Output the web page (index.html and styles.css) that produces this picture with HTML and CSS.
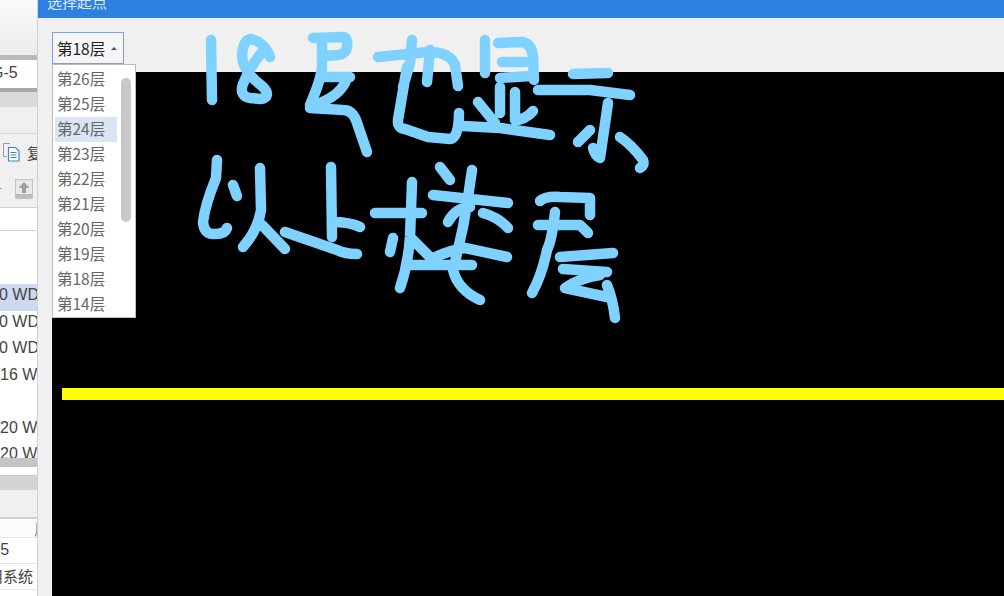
FILE: index.html
```html
<!DOCTYPE html>
<html lang="zh">
<head>
<meta charset="utf-8">
<title>选择起点</title>
<link rel="stylesheet" href="styles.css">
</head>
<body>
<div class="app">
  <aside class="side">
    <div class="side-top"></div>
    <div class="band-dark"></div>
    <div class="field"><span class="clip">G-5</span></div>
    <div class="band-thin"></div>
    <div class="band-grey"></div>
    <div class="side-plain"></div>
    <div class="tool-row">
      <svg class="doc-icon" viewBox="0 0 20 20" width="20" height="20">
        <path d="M8 1.500H1.500v13H5" fill="none" stroke="#9a9a9a"/>
        <path d="M6.500 5.500h7l3.500 3.500v10h-10.500z" fill="#fff" stroke="#3f88c8" stroke-width="1.200"/>
        <path d="M8.500 10.500h6M8.500 13h6M8.500 15.500h6" stroke="#3f88c8" stroke-width="1.200"/>
      </svg>
      <span class="tool-label">复</span>
    </div>
    <div class="tool-row second">
      <span class="dash"></span>
      <span class="up-btn">
        <svg viewBox="0 0 18 20" width="18" height="20">
          <rect x="0.500" y="0.500" width="17" height="19" fill="#e9e9e9" stroke="#c4c4c4"/>
          <rect x="1" y="15" width="16" height="4" fill="#bdbdbd"/>
          <path d="M9 3l5.500 6h-3.500v5h-4v-5h-3.500z" fill="#a0a0a0"/>
        </svg>
      </span>
    </div>
    <div class="list-head"></div>
    <ul class="list">
      <li class="blank"></li>
      <li class="sel"><span class="clip wd">0 WD</span></li>
      <li><span class="clip wd">0 WD</span></li>
      <li><span class="clip wd">0 WD</span></li>
      <li><span class="clip wd16">16 W</span></li>
      <li></li>
      <li><span class="clip wd16">20 W</span></li>
      <li class="cut"><span class="clip wd16">20 W</span></li>
    </ul>
    <div class="hscroll"></div>
    <div class="band-white"></div>
    <div class="band-grey low"></div>
    <div class="side-plain low"></div>
    <div class="table-head"><span class="col-mark">厂</span></div>
    <div class="cell"><span class="clip small">-5</span></div>
    <div class="cell"><span class="clip sys">用系统</span></div>
  </aside>

  <main class="dialog">
    <header class="titlebar"><span class="title">选择起点</span></header>
    <div class="toolbar">
      <div class="select"><span>第18层</span><i class="caret"></i></div>
    </div>
    <div class="stage">
      <div class="gutter"></div>
      <div class="canvas"><div class="route"></div></div>
    </div>
    <ul class="menu">
      <li>第26层</li>
      <li>第25层</li>
      <li class="active">第24层</li>
      <li>第23层</li>
      <li>第22层</li>
      <li>第21层</li>
      <li>第20层</li>
      <li>第19层</li>
      <li>第18层</li>
      <li>第14层</li>
    </ul>
    <div class="menu-thumb"></div>
  </main>

  <svg class="ink" viewBox="0 0 1004 596" width="1004" height="596" fill="none" stroke="#7fd1ff" stroke-width="10.500" stroke-linecap="round" stroke-linejoin="round">
    <path d="M211 40L212 100"/>
    <path d="M270 57C266 46 258 40 250 39C243 41 241 52 243 62C245 72 254 80 263 87C269 93 268 98 261 99L250 98C243 97 240 92 243 84C247 74 254 62 262 52"/>
    <path d="M313 38L343 37Q348 38 347 47Q346 54 338 55L323 56M322 40L322 67Q321 80 310 105M322 77L350 77M347 78Q342 94 320 103M310 108L343 110Q352 110 356 120L367 152"/>
    <path d="M378 57L428 52Q450 52 455 65L458 86M412 40L410 63L403 87M430 50L427 82M407 67L398 120Q397 128 405 129L428 137L450 139Q459 138 459 113"/>
    <path d="M485 40L485 73M498 43L522 42Q532 44 533 57L534 80M502 62L525 62M500 78L530 76M500 87L500 113M515 92L515 120Q525 120 533 111M478 102L495 123M463 126L500 128L550 135"/>
    <path d="M573 74L608 73M538 90L590 90L630 95M608 103Q604 130 600 158Q595 156 593 148M590 130L578 142M620 137Q632 145 643 160Q645 165 640 168"/>
    <path d="M217 160L216 178Q205 205 203 222Q204 235 215 234Q225 234 227 228M233 185L237 196"/>
    <path d="M260 168L261 210Q258 230 243 247M262 225L285 249"/>
    <path d="M331 167L332 237M332 222Q350 222 360 227M285 232L337 250Q345 254 357 254"/>
    <path d="M375 213L422 213M412 182L410 237Q408 265 400 288M410 237L433 260M393 238L390 252M440 167L450 180M472 170Q468 200 463 227Q458 250 453 270Q458 290 480 300M433 195L508 203M448 222Q455 208 470 207M483 213Q498 217 508 228M433 258Q450 250 465 248L507 257M410 265L472 265"/>
    <path d="M540 201Q545 196 560 197L590 198L590 215M538 225L580 225L588 233M555 212Q552 240 547 250Q542 275 532 293M560 257L613 253M563 269L607 272M600 275Q580 278 565 288L607 297M607 285Q613 300 615 318"/>
  </svg>
</div>
</body>
</html>
```
FILE: styles.css
```css
* { box-sizing: border-box; }
html, body { margin: 0; padding: 0; height: 100%; overflow: hidden; }
body { font-family: "Noto Sans CJK SC", "Liberation Sans", sans-serif; background: #000; }
ul { list-style: none; margin: 0; padding: 0; }

.app { position: relative; display: flex; width: 1004px; height: 596px; overflow: hidden; }

/* left, clipped window */
.side { width: 38px; flex: none; height: 596px; background: #fff; border-right: 1px solid #c9d3de; overflow: hidden; font-family: "Liberation Sans", "Noto Sans CJK SC", sans-serif; font-size: 16px; color: #444; }
.side-top { height: 55px; background: linear-gradient(#fafafa, #ececec); }
.band-dark { height: 5px; background: #b9b9b9; }
.field { height: 28px; display: flex; align-items: center; background: #fff; padding-bottom: 2px; }
.clip { display: block; white-space: nowrap; }
.field .clip { margin-left: -9px; }
.band-thin { height: 4px; background: #a9a9a9; }
.band-grey { height: 15px; background: #d9d9d9; }
.side-plain { height: 26px; background: #f0f0f0; }
.tool-row { height: 37px; background: #f0f0f0; display: flex; align-items: center; border-top: 1px solid #d8d8d8; position: relative; }
.doc-icon { margin-left: 2px; flex: none; }
.tool-label { margin-left: 5px; font-family: "Noto Sans CJK SC", sans-serif; font-size: 15px; white-space: nowrap; }
.tool-row.second { border-top: 0; }
.dash { width: 2px; height: 1px; background: #999; flex: none; }
.up-btn { margin-left: 13px; display: flex; }
.list-head { height: 24px; background: #fff; border-top: 1px solid #cfcfcf; border-bottom: 1px solid #cfcfcf; }
.list { height: 227px; overflow: hidden; background: #fff; }
.list li { height: 26.500px; display: flex; align-items: center; white-space: nowrap; padding-bottom: 4px; }
.list li.blank { height: 53px; }
.list li.sel { background: #ccd9ee; }
.wd { margin-left: -1px; }
.wd16 { margin-left: 0; }
.hscroll { height: 9px; background: #c4c4c4; }
.band-white { height: 9px; background: #fff; border-top: 3px solid #fff; border-bottom: 1px solid #ccc; }
.band-grey.low { height: 14px; background: #d4d4d4; }
.side-plain.low { height: 27px; }
.table-head { height: 21px; background: #fbfbfb; border-top: 2px solid #cfcfcf; border-bottom: 1px solid #e8e8e8; display: flex; justify-content: flex-end; align-items: center; }
.col-mark { font-family: "Noto Sans CJK SC", sans-serif; font-size: 16px; color: #a58a72; margin-right: -13px; }
.cell { height: 26px; display: flex; align-items: center; border-bottom: 1px solid #e4e4e4; background: #fff; padding-bottom: 2px; }
.small { margin-left: -5px; }
.sys { margin-left: -12px; font-family: "Noto Sans CJK SC", sans-serif; font-size: 15px; }

/* dialog */
.dialog { position: relative; flex: 1; min-width: 0; height: 596px; display: flex; flex-direction: column; background: #f0f0f0; }
.titlebar { height: 18px; flex: none; background: #2e80e0; display: flex; align-items: flex-start; padding-left: 9px; overflow: hidden; }
.title { color: #d9e9fb; font-size: 15px; line-height: 22px; margin-top: -9px; white-space: nowrap; }
.toolbar { height: 54px; flex: none; background: #f0f0f0; border-top: 1px solid #e4eff9; padding: 13px 0 0 14px; }
.select { width: 72px; height: 32px; border: 1px solid #7f9fdc; background: #f6f6f6; display: flex; align-items: center; padding-left: 4px; font-size: 15.500px; color: #222; }
.caret { width: 0; height: 0; margin-left: 6px; border-left: 3px solid transparent; border-right: 3px solid transparent; border-bottom: 3px solid #555; }
.stage { flex: 1; display: flex; min-height: 0; }
.gutter { width: 14px; flex: none; background: #f0f0f0; }
.canvas { flex: 1; background: #000; padding: 316px 0 0 10px; }
.route { height: 12px; background: #ffff00; }

.menu { position: absolute; left: 14px; top: 64px; width: 84px; height: 254px; padding: 2px 2px 0; background: #fff; border: 1px solid #bcbcbc; }
.menu li { height: 25px; width: 62px; padding-left: 2px; line-height: 23px; font-size: 15.500px; color: #666; white-space: nowrap; }
.menu li.active { background: #dbe4f4; }
.menu-thumb { position: absolute; left: 83px; top: 78px; width: 10px; height: 144px; border-radius: 5px; background: #c8c8c8; }

/* handwriting drawn on top of the screenshot */
.ink { position: absolute; left: 0; top: 0; pointer-events: none; }
```
